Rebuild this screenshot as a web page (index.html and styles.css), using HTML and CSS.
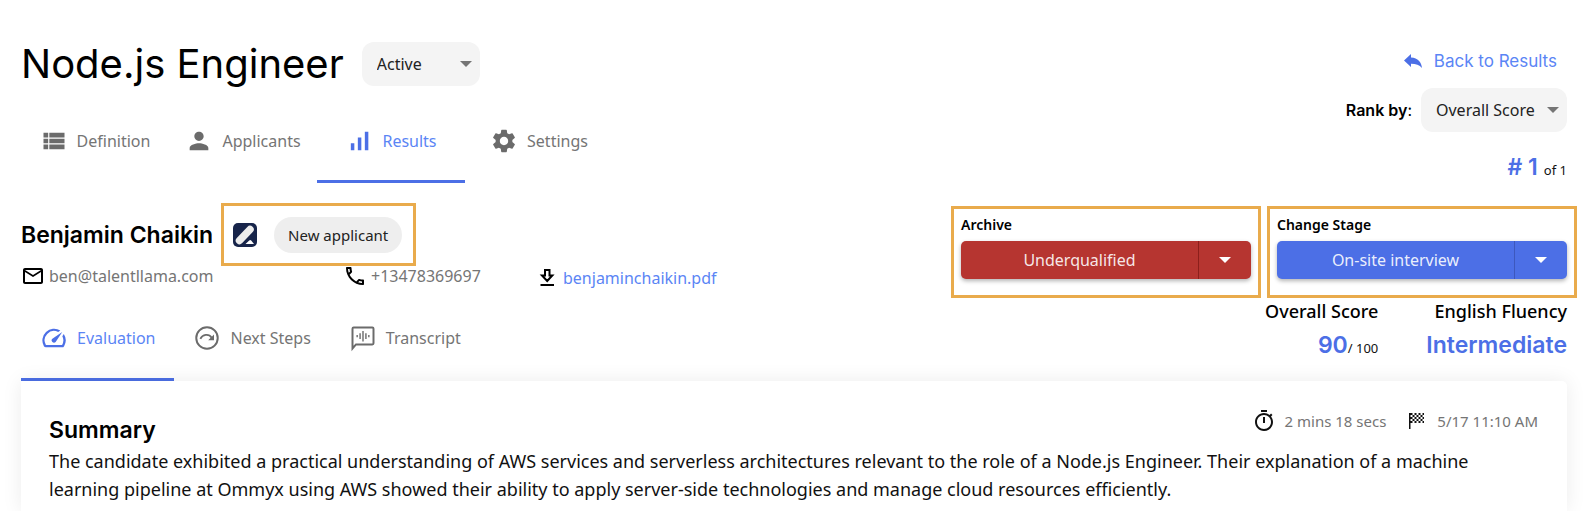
FILE: index.html
```html
<!DOCTYPE html>
<html lang="en">
<head>
<meta charset="utf-8">
<meta name="viewport" content="width=device-width, initial-scale=1">
<title>Node.js Engineer – Results</title>
<link rel="stylesheet" href="styles.css">
</head>
<body>
<main class="page">
  <header class="top">
    <div class="top-left">
      <div class="title-row">
        <h1 class="title">Node.js Engineer</h1>
        <div class="picker picker-status">
          <select class="picker-input" aria-label="Job status"><option>Active</option></select>
          <svg class="caret" viewBox="0 0 12 6"><path d="M0 0h12L6 6z"/></svg>
        </div>
      </div>
      <nav class="tabs tabs-main" aria-label="Job">
        <a class="tab" href="#definition"><svg class="icon" viewBox="0 0 24 24"><path d="M3 14h4v-4H3v4zm0 5h4v-4H3v4zM3 9h4V5H3v4zm5 5h13v-4H8v4zm0 5h13v-4H8v4zM8 5v4h13V5H8z"/></svg>Definition</a>
        <a class="tab" href="#applicants"><svg class="icon" viewBox="0 0 24 24"><path d="M12 12c2.21 0 4-1.79 4-4s-1.79-4-4-4-4 1.79-4 4 1.79 4 4 4zm0 2c-2.67 0-8 1.34-8 4v2h16v-2c0-2.66-5.33-4-8-4z"/></svg>Applicants</a>
        <a class="tab tab-active" href="#results" aria-current="page"><svg class="icon" viewBox="0 0 24 24"><path d="M17 4h3v16h-3zM5 14h3v6H5zm6-5h3v11h-3z"/></svg>Results</a>
        <a class="tab" href="#settings"><svg class="icon" viewBox="0 0 24 24"><path d="M19.14 12.94c.04-.3.06-.61.06-.94 0-.32-.02-.64-.07-.94l2.03-1.58c.18-.14.23-.41.12-.61l-1.92-3.32c-.12-.22-.37-.29-.59-.22l-2.39.96c-.5-.38-1.03-.7-1.62-.94l-.36-2.54c-.04-.24-.24-.41-.48-.41h-3.84c-.24 0-.43.17-.47.41l-.36 2.54c-.59.24-1.13.57-1.62.94l-2.39-.96c-.22-.08-.47 0-.59.22L2.74 8.87c-.12.21-.08.47.12.61l2.03 1.58c-.05.3-.09.63-.09.94s.02.64.07.94l-2.03 1.58c-.18.14-.23.41-.12.61l1.92 3.32c.12.22.37.29.59.22l2.39-.96c.5.38 1.03.7 1.62.94l.36 2.54c.05.24.24.41.48.41h3.84c.24 0 .44-.17.47-.41l.36-2.54c.59-.24 1.13-.56 1.62-.94l2.39.96c.22.08.47 0 .59-.22l1.92-3.32c.12-.22.07-.47-.12-.61l-2.01-1.58zM12 15.6c-1.98 0-3.6-1.62-3.6-3.6s1.62-3.6 3.6-3.6 3.6 1.62 3.6 3.6-1.62 3.6-3.6 3.6z"/></svg>Settings</a>
      </nav>
    </div>
    <div class="top-right">
      <a class="back" href="#results"><svg class="back-icon" viewBox="0 0 18 14"><path d="M7 0v3.400C14 3.800 17.500 8 18 14c-2.500-3.200-6-4.200-11-4.200V13L0 6.500z"/></svg>Back to Results</a>
      <div class="rank-by">
        <label class="rank-label" for="rank"><strong>Rank by</strong>:</label>
        <div class="picker picker-rank">
          <select class="picker-input" id="rank"><option>Overall Score</option></select>
          <svg class="caret" viewBox="0 0 12 6"><path d="M0 0h12L6 6z"/></svg>
        </div>
      </div>
      <p class="rank"><strong class="figure"># 1</strong><span>of 1</span></p>
    </div>
  </header>

  <section class="profile">
    <div class="profile-left">
      <div class="name-row">
        <h2 class="name">Benjamin Chaikin</h2>
        <div class="outlined badges">
          <svg class="source" viewBox="0 0 24 24"><rect width="24" height="24" rx="5" fill="#17244a"/><path d="M6.500 17.500 17 6.500" stroke="#ececec" stroke-width="7.500" stroke-linecap="round"/><path d="M12.500 21h8.500l-2.800-3.600q-1-1-2 0z" fill="#fff"/></svg>
          <span class="chip">New applicant</span>
        </div>
      </div>
      <div class="contacts">
        <span class="contact"><svg class="contact-icon" viewBox="0 0 24 24"><path d="M22 6c0-1.100-.9-2-2-2H4c-1.100 0-2 .9-2 2v12c0 1.100.9 2 2 2h16c1.100 0 2-.9 2-2V6zm-2 0-8 5-8-5h16zm0 12H4V8l8 5 8-5v10z"/></svg>ben@talentllama.com</span>
        <span class="contact"><svg class="contact-icon" viewBox="0 0 24 24"><path d="M6.540 5c.06.89.21 1.760.45 2.590l-1.200 1.200c-.41-1.200-.67-2.470-.76-3.790h1.510m9.860 12.020c.85.24 1.720.39 2.600.45v1.490c-1.320-.09-2.590-.35-3.800-.75l1.200-1.190M7.500 3H4c-.55 0-1 .45-1 1 0 9.390 7.610 17 17 17 .55 0 1-.45 1-1v-3.490c0-.55-.45-1-1-1-1.240 0-2.450-.2-3.570-.57-.1-.04-.21-.05-.31-.05-.26 0-.51.1-.71.29l-2.200 2.200c-2.830-1.450-5.150-3.760-6.590-6.590l2.200-2.200c.28-.28.36-.67.25-1.020C8.700 6.450 8.500 5.250 8.500 4c0-.55-.45-1-1-1z"/></svg>+13478369697</span>
        <a class="contact contact-file" href="#resume"><svg class="contact-icon" viewBox="0 0 24 24"><path d="M10 4h4.500v5.500h2.800L12.200 15 7 9.500h3z" fill="none" stroke="#000" stroke-width="2"/><path d="M5.500 18h13.500v2H5.500z"/></svg>benjaminchaikin.pdf</a>
      </div>
      <nav class="tabs tabs-sub" aria-label="Applicant">
        <a class="tab tab-active" href="#evaluation" aria-current="page"><svg class="icon" viewBox="0 0 24 24"><path d="m20.380 8.570-1.230 1.850a8 8 0 0 1-.22 7.580H5.070A8 8 0 0 1 15.580 6.850l1.850-1.230A10 10 0 0 0 3.350 19a2 2 0 0 0 1.720 1h13.850a2 2 0 0 0 1.740-1 10 10 0 0 0-.27-10.440zm-9.790 6.840a2 2 0 0 0 2.830 0l5.660-8.490-8.490 5.660a2 2 0 0 0 0 2.830z"/></svg>Evaluation</a>
        <a class="tab" href="#next"><svg class="icon" viewBox="0 0 24 24"><circle cx="12" cy="12" r="9.200" fill="none" stroke="currentColor" stroke-width="1.700"/><path d="M6.300 12.800c1.800-4 7.200-4.900 9.700-1.100" fill="none" stroke="currentColor" stroke-width="1.500"/><path d="M18 9v5h-5z"/></svg>Next Steps</a>
        <a class="tab" href="#transcript"><svg class="icon" viewBox="0 0 24 24"><path d="M3 21V4q0-1 1-1h16q1 0 1 1v12.500q0 1-1 1H6z" fill="none" stroke="currentColor" stroke-width="1.700"/><path d="M7 9.500v1.800M9.500 8v4.800M12 6v9M14.500 8v4.800M17 9.500v1.800" stroke="currentColor" stroke-width="1.200"/></svg>Transcript</a>
      </nav>
    </div>

    <div class="profile-right">
      <div class="actions">
        <div class="outlined action">
          <span class="action-label" id="archive-label">Archive</span>
          <div class="split split-danger" role="group" aria-labelledby="archive-label">
            <button class="split-main" type="button">Underqualified</button>
            <button class="split-more" type="button" aria-label="More archive reasons"><svg class="caret" viewBox="0 0 12 6"><path d="M0 0h12L6 6z"/></svg></button>
          </div>
        </div>
        <div class="outlined action">
          <span class="action-label" id="stage-label">Change Stage</span>
          <div class="split split-primary" role="group" aria-labelledby="stage-label">
            <button class="split-main" type="button">On-site interview</button>
            <button class="split-more" type="button" aria-label="More stages"><svg class="caret" viewBox="0 0 12 6"><path d="M0 0h12L6 6z"/></svg></button>
          </div>
        </div>
      </div>
      <dl class="scores">
        <div class="score"><dt>Overall Score</dt><dd><strong class="figure">90</strong>/ 100</dd></div>
        <div class="score"><dt>English Fluency</dt><dd><strong class="figure">Intermediate</strong></dd></div>
      </dl>
    </div>
  </section>

  <article class="card">
    <div class="card-head">
      <h3 class="card-title">Summary</h3>
      <div class="meta">
        <span class="meta-item"><svg class="meta-icon" viewBox="0 0 24 24"><path d="M15 1H9v2h6V1zm-4 13h2V8h-2v6zm8.030-6.610 1.420-1.420c-.43-.51-.9-.99-1.410-1.410l-1.420 1.420C16.070 4.740 14.120 4 12 4c-4.970 0-9 4.030-9 9s4.020 9 9 9 9-4.030 9-9c0-2.120-.74-4.070-1.970-5.610zM12 20c-3.870 0-7-3.130-7-7s3.130-7 7-7 7 3.130 7 7-3.130 7-7 7z"/></svg>2 mins 18 secs</span>
        <span class="meta-item"><svg class="meta-icon" viewBox="0 0 24 24"><path d="M5 4h1.500v16H5zM6.500 4h2v2h-2zM10.500 4h2v2h-2zM14.500 4h2v2h-2zM18.500 4H20v2h-1.500zM8.500 6h2v2h-2zM12.500 6h2v2h-2zM16.500 6h2v2h-2zM6.500 8h2v2h-2zM10.500 8h2v2h-2zM14.500 8h2v2h-2zM18.500 8H20v2h-1.500zM8.500 10h2v2h-2zM12.500 10h2v2h-2zM16.500 10h2v2h-2zM6.500 12h2v2h-2zM10.500 12h2v2h-2zM14.500 12h2v2h-2zM18.500 12H20v2h-1.500z"/></svg>5/17 11:10 AM</span>
      </div>
    </div>
    <p class="summary">The candidate exhibited a practical understanding of AWS services and serverless architectures relevant to the role of a Node.js Engineer. Their explanation of a machine learning pipeline at Ommyx using AWS showed their ability to apply server-side technologies and manage cloud resources efficiently.</p>
  </article>
</main>
</body>
</html>
```
FILE: styles.css
```css
:root {
  --blue: #4c6fe6;
  --link: #5b85f5;
  --grey: #6b6b6b;
  --muted: #757575;
  --outline: #e9ab4c;
  --display: Inter, "Liberation Sans", sans-serif;
}

* { box-sizing: border-box; }

body {
  margin: 0;
  background: #fff;
  color: #111;
  font: 16px/20px "Noto Sans", "Open Sans", sans-serif;
}

h1, h2, h3, p, dl, dd { margin: 0; }
a { color: inherit; text-decoration: none; }
svg { display: block; flex: none; fill: currentColor; }

.page { padding: 42px 29px 16px 21px; }

.top, .profile {
  display: flex;
  justify-content: space-between;
  align-items: flex-start;
}

.title-row { display: flex; align-items: center; gap: 18px; }
.title { font: 400 40px/44px var(--display); color: #000; }

.picker { display: grid; align-items: center; }
.picker-input {
  grid-area: 1 / 1;
  width: 100%;
  height: 44px;
  padding: 0 28px 0 15px;
  border: 0;
  border-radius: 12px;
  background: #f4f4f4;
  color: #222;
  font: inherit;
  appearance: none;
}
.picker .caret { grid-area: 1 / 1; justify-self: end; margin-right: 8px; color: #757575; pointer-events: none; }
.picker-status { width: 118px; }
.picker-rank { width: 146px; }
.caret { width: 12px; height: 6px; }

.tabs { display: flex; }
.tab {
  display: flex;
  align-items: center;
  justify-content: center;
  gap: 9px;
  padding-top: 2px;
  border-bottom: 3px solid transparent;
  color: var(--muted);
}
.tab-active { color: var(--link); border-color: var(--blue); }
.icon { width: 28px; height: 28px; color: var(--grey); }
.tab-active .icon { color: var(--blue); }
.tabs-main { margin-top: 13px; }
.tabs-main .tab { width: 148px; height: 84px; }
.tabs-sub { margin-top: 10px; }
.tabs-sub .tab { height: 85px; padding-left: 19px; padding-right: 19px; }

.top-right { display: flex; flex-direction: column; align-items: flex-end; }
.back {
  display: flex;
  align-items: center;
  gap: 12px;
  height: 38px;
  margin: 0 10px 8px 0;
  color: var(--link);
  font: 400 17px/20px var(--display);
}
.back-icon { width: 18px; height: 14px; color: var(--blue); }
.rank-by { display: flex; align-items: center; gap: 9px; }
.rank-label { font-family: var(--display); color: #000; }
.rank-label strong { font-weight: 600; }
.rank { display: flex; align-items: baseline; gap: 6px; margin-top: 18px; font-size: 13px; line-height: 34px; }
.figure { color: var(--blue); font: 600 23px/34px var(--display); }

.outlined { border: 3px solid var(--outline); }
.name-row { display: flex; align-items: center; gap: 8px; margin-top: 16px; }
.name { font: 600 23px/30px var(--display); color: #000; }
.badges { display: flex; align-items: center; gap: 17px; height: 63px; padding: 0 11px 0 9px; }
.source { width: 24px; height: 24px; }
.chip { padding: 8px 14px; border-radius: 18px; background: #eee; color: #222; font-size: 15px; }

.contacts { display: grid; grid-template: 20px / 322px 192px auto; color: var(--muted); }
.contact { display: flex; align-items: center; gap: 4px; }
.contact-icon { width: 24px; height: 24px; color: #000; }
.contact-file { padding-top: 4px; color: var(--link); }

.actions { display: flex; gap: 6px; margin: 19px -10px 0 0; }
.action { width: 310px; height: 92px; padding: 6px 7px 0; }
.action-label { display: block; margin-bottom: 6px; font-size: 14px; font-weight: 600; color: #000; }
.split { display: flex; height: 38px; border-radius: 5px; overflow: hidden; box-shadow: 0 2px 4px rgba(0, 0, 0, .3); color: #fff; }
.split-danger { background: #b63530; }
.split-primary { background: #4c6fe6; }
.split button { border: 0; background: none; color: inherit; font: inherit; padding: 0; }
.split .split-main { flex: 1; color: rgba(255, 255, 255, .9); }
.split .split-more { display: flex; align-items: center; justify-content: center; width: 53px; border-left: 1px solid #8c1f1b; }
.split-primary .split-more { border-left-color: #3d58bd; }

.scores { display: flex; justify-content: flex-end; gap: 48px; text-align: right; }
.score dt { padding-bottom: 4px; font-size: 18px; line-height: 26px; font-weight: 500; color: #000; }
.score dd { font-size: 13px; line-height: 34px; }

.card {
  padding: 28px 29px 0 28px;
  border-radius: 0 5px 0 0;
  background: #fff;
  box-shadow: 0 0 20px rgba(0, 0, 0, .08);
  clip-path: inset(-20px -20px 0);
}
.card-head { display: flex; justify-content: space-between; }
.card-title { margin-top: 4px; font: 600 23px/34px var(--display); color: #000; }
.meta { display: flex; gap: 18px; height: 24px; color: var(--muted); font-size: 15px; }
.meta-item { display: flex; align-items: center; gap: 9px; }
.meta-icon { width: 24px; height: 24px; color: #111; }
.summary { padding-bottom: 8px; font-size: 18px; line-height: 28px; }
```
